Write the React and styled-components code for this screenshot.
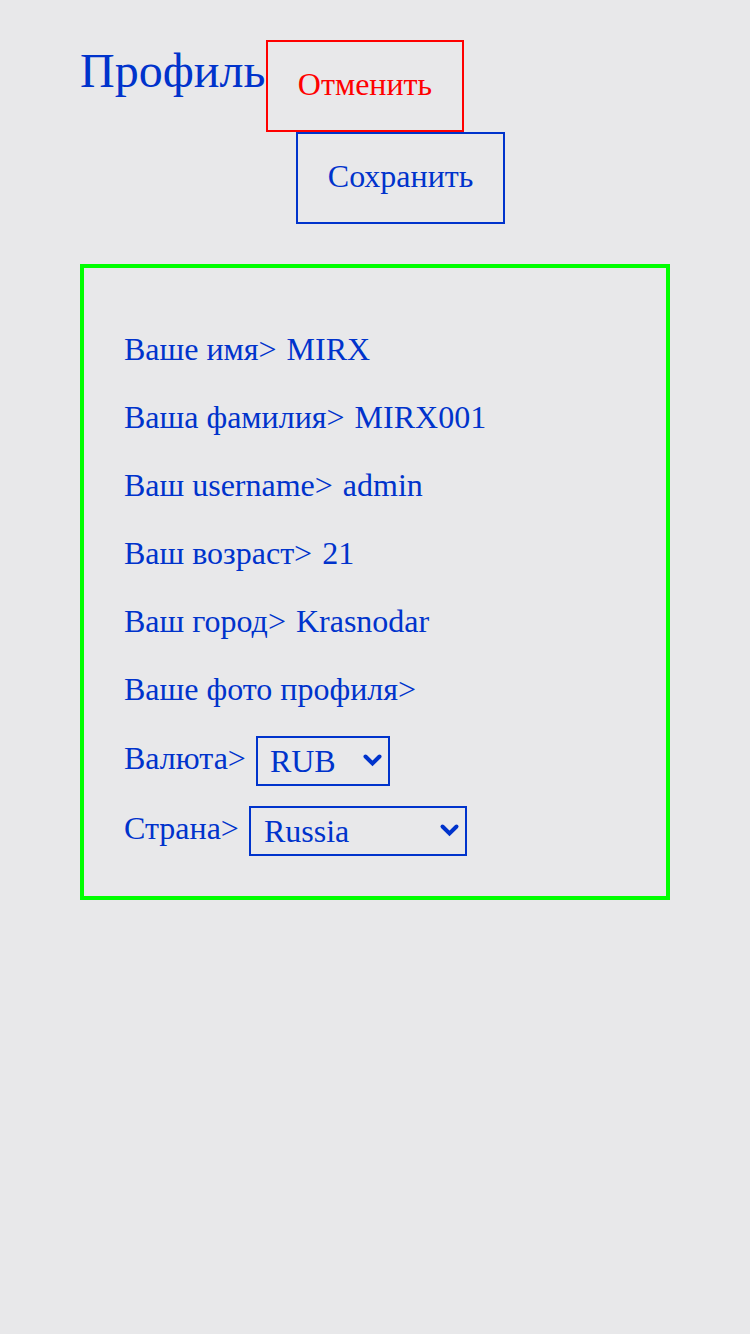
import React from "react";
import styled, { createGlobalStyle } from "styled-components";

const Global = createGlobalStyle`
  html, body { margin: 0; padding: 0; background: #e8e8ea; }
  body { font-family: "Liberation Serif", "Times New Roman", serif; color: #0033cc; }
`;

const Page = styled.div`
  padding: 40px 80px;
  min-height: 1334px;
  box-sizing: border-box;
`;

const Header = styled.header`
  display: flex;
  align-items: flex-start;
`;

const Title = styled.h1`
  margin: 0;
  margin-top: 3px;
  font-size: 48px;
  font-weight: normal;
  line-height: 56px;
  color: #0033cc;
`;

const Buttons = styled.div`
  display: flex;
  flex-direction: column;
  align-items: flex-start;
  margin-left: 1px;
`;

const Button = styled.button`
  height: 92px;
  padding: 0 29.5px 5px;
  margin-left: ${(p) => p.$offset || 0}px;
  background: transparent;
  border: 2px solid ${(p) => p.$color};
  color: ${(p) => p.$color};
  font-family: "Liberation Serif", "Times New Roman", serif;
  font-size: 32px;
  line-height: 36px;
  cursor: pointer;
`;

const Card = styled.section`
  margin-top: 40px;
  width: 590px;
  box-sizing: border-box;
  border: 4px solid #00ff00;
  padding: 56px 40px 40px;
  display: flex;
  flex-direction: column;
  gap: 18px;
`;

const Row = styled.div`
  display: flex;
  align-items: ${(p) => (p.$tall ? "flex-start" : "center")};
  height: 50px;
  margin-top: ${(p) => p.$shift || 0}px;
  font-size: 32px;
  line-height: 36px;
  white-space: pre;
`;

const Label = styled.span`
  padding-top: ${(p) => (p.$tall ? 4 : 0)}px;
`;

const Value = styled.span`
  margin-left: 10px;
`;

const SelectWrap = styled.div`
  position: relative;
  margin-left: 10px;
  width: ${(p) => p.$width}px;
  height: 50px;
`;

const Select = styled.select`
  appearance: none;
  -webkit-appearance: none;
  width: 100%;
  height: 100%;
  box-sizing: border-box;
  border: 2px solid #0033cc;
  border-radius: 0;
  background: transparent;
  color: #0033cc;
  font-family: "Liberation Serif", "Times New Roman", serif;
  font-size: 32px;
  padding: 0 0 0 ${(p) => p.$pad}px;
  outline: none;
`;

const Chevron = styled.svg`
  position: absolute;
  right: 7px;
  top: 17px;
  width: 21px;
  height: 14px;
  pointer-events: none;
`;

function Dropdown({ width, pad, value, options }) {
  return (
    <SelectWrap $width={width}>
      <Select $pad={pad} defaultValue={value}>
        {options.map((o) => (
          <option key={o}>{o}</option>
        ))}
      </Select>
      <Chevron viewBox="0 0 21 14">
        <path d="M3.5 3.5 L10.5 10.5 L17.5 3.5" fill="none" stroke="#0033cc" strokeWidth="4" strokeLinecap="round" strokeLinejoin="miter" />
      </Chevron>
    </SelectWrap>
  );
}

const rows = [
  ["Ваше имя>", "MIRX"],
  ["Ваша фамилия>", "MIRX001"],
  ["Ваш username>", "admin"],
  ["Ваш возраст>", "21"],
  ["Ваш город>", "Krasnodar"],
  ["Ваше фото профиля>", ""],
];

export default function App() {
  return (
    <>
      <Global />
      <Page>
        <Header>
          <Title>Профиль</Title>
          <Buttons>
            <Button $color="#ff0000">Отменить</Button>
            <Button $color="#0033cc" $offset={30}>Сохранить</Button>
          </Buttons>
        </Header>
        <Card>
          {rows.map(([label, value]) => (
            <Row key={label}>
              <Label>{label}</Label>
              {value && <Value>{value}</Value>}
            </Row>
          ))}
          <Row $tall $shift={4}>
            <Label $tall>Валюта&gt;</Label>
            <Dropdown width={134} pad={12} value="RUB" options={["RUB", "USD", "EUR"]} />
          </Row>
          <Row $tall $shift={2}>
            <Label $tall>Страна&gt;</Label>
            <Dropdown width={218} pad={13} value="Russia" options={["Russia", "USA", "Germany"]} />
          </Row>
        </Card>
      </Page>
    </>
  );
}
